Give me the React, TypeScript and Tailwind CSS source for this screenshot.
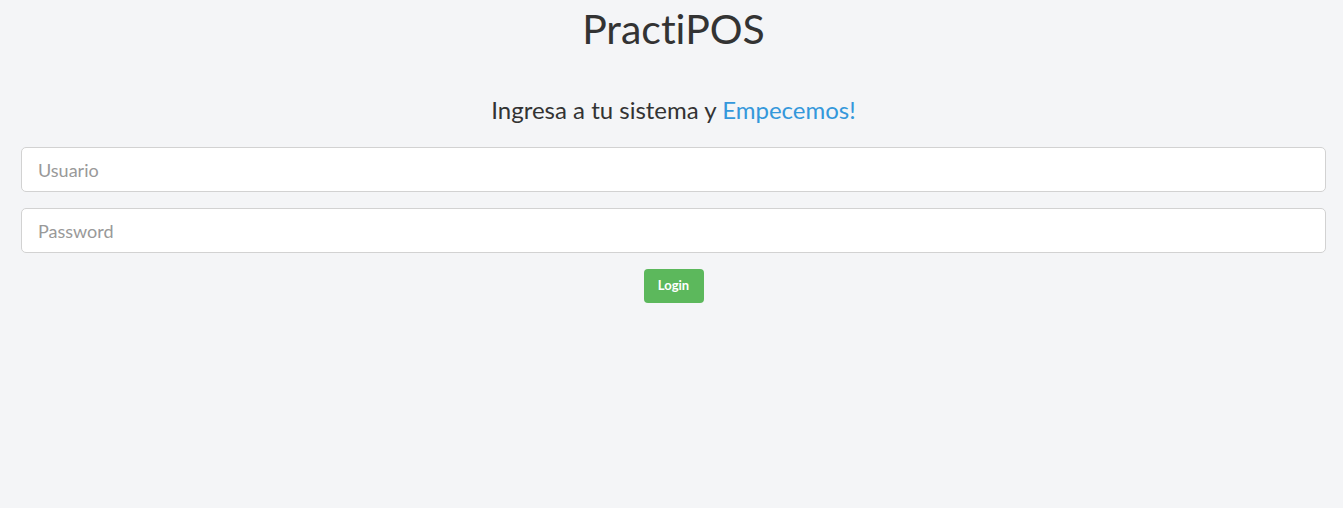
export default function App() {
  return (
    <div
      className="min-h-[508px] bg-[#f4f5f7] text-[#333]"
      style={{ fontFamily: 'Lato, "Open Sans", sans-serif' }}
    >
      <div className="ml-[21px] mr-[17px] flex flex-col items-center">
        <h1 className="mt-[5px] text-[41px] leading-[48px] text-[#333]" style={{ fontVariantLigatures: 'none' }}>
          PractiPOS
        </h1>
        <h3 className="mt-[42px] text-[24px] leading-[30px] text-[#333]">
          Ingresa a tu sistema y <span className="text-[#3498db]">Empecemos!</span>
        </h3>
        <form className="mt-[22px] flex w-full flex-col items-center">
          <input
            type="text"
            placeholder="Usuario"
            className="h-[45px] w-full rounded-[5px] border border-[#d2d2d2] bg-white px-[16px] text-[18px] text-[#555] placeholder:text-[#999] outline-none"
          />
          <input
            type="password"
            placeholder="Password"
            className="mt-[16px] h-[45px] w-full rounded-[5px] border border-[#d2d2d2] bg-white px-[16px] text-[18px] text-[#555] placeholder:text-[#999] outline-none"
          />
          <button
            type="button"
            className="mt-[16px] h-[34px] w-[60px] rounded-[4px] bg-[#5cb85c] text-[13px] font-bold text-white"
          >
            Login
          </button>
        </form>
      </div>
    </div>
  )
}
